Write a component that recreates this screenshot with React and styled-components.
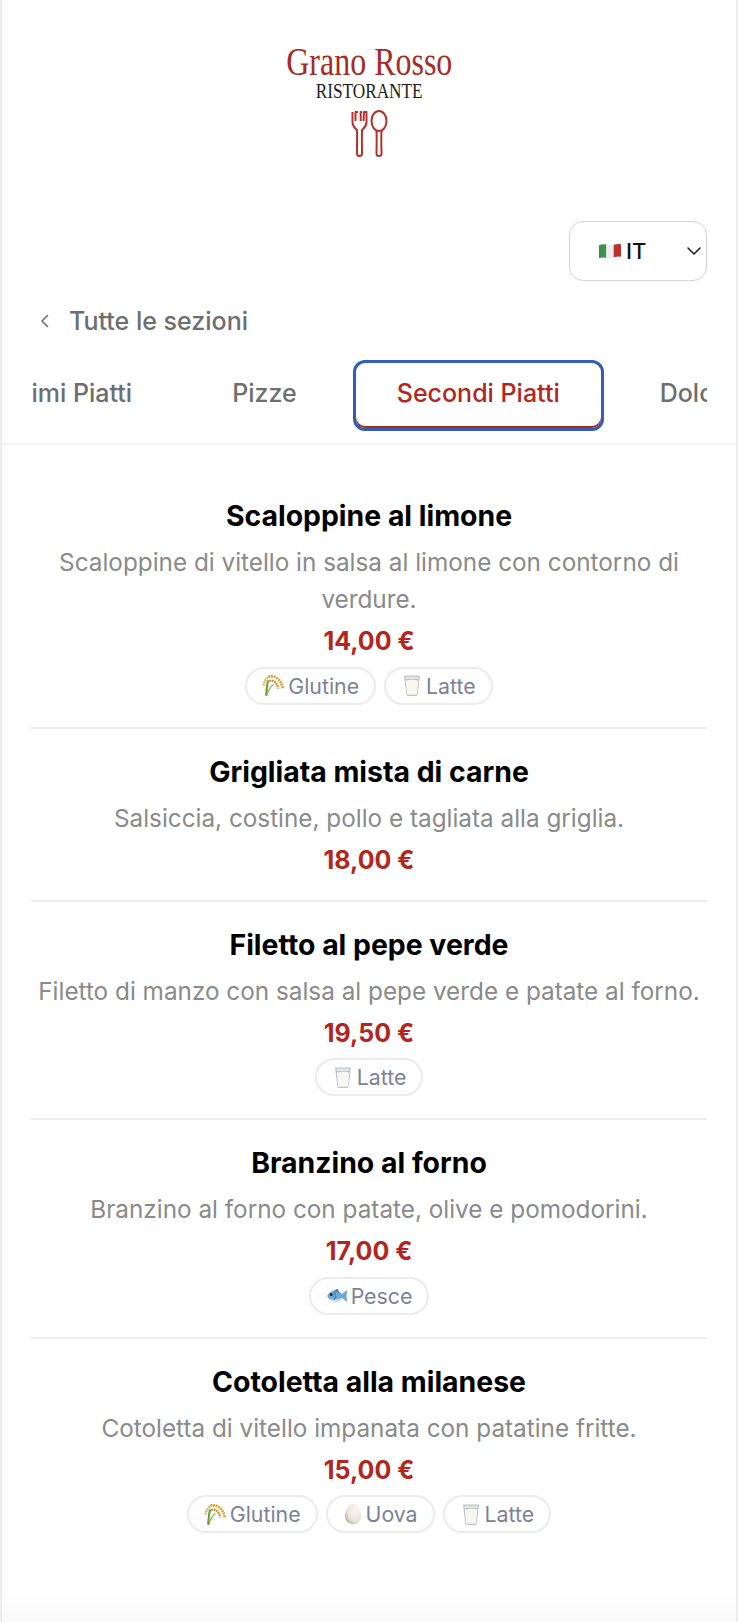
import React from 'react'
import styled, { createGlobalStyle } from 'styled-components'

const Wheat = () => (
	<svg width="23" height="23" viewBox="0 0 22 22" fill="none" strokeLinecap="butt">
		<path d="M4 21 C4.5 15 4.5 10 6 6" stroke="#6f9e38" strokeWidth="2" />
		<path d="M5 20 C6 15 8 12 11 10" stroke="#93b64c" strokeWidth="1.3" />
		<path d="M5.5 3.5 C3.5 5 2 7.5 1.5 11" stroke="#d8b25a" strokeWidth="2.2" strokeDasharray="1.8 .6" />
		<path d="M6 3 C11 0.5 18 4 20 14" stroke="#dca63e" strokeWidth="2.6" strokeDasharray="2 .6" />
		<path d="M7 7 C10.5 5 14.5 8 15.5 14" stroke="#c9923a" strokeWidth="2.2" strokeDasharray="1.8 .6" />
	</svg>
)

const Milk = () => (
	<svg width="22" height="23" viewBox="-2 0 22 22">
		<path d="M1 1 H17 L14.7 20 Q14.5 21.4 13 21.4 H5 Q3.5 21.4 3.3 20 Z" fill="#bfc4c7" />
		<path d="M2.8 6 Q9 4.6 15.3 6 L14 19.4 Q13.9 20.3 13 20.3 H5 Q4.1 20.3 4 19.4 Z" fill="#f8f6f0" />
		<path d="M2.4 2.2 H15.6 L15.4 4.6 H2.7 Z" fill="#e3e6e8" />
	</svg>
)

const Egg = () => (
	<svg width="20" height="22" viewBox="-1 0 20 22">
		<defs>
			<radialGradient id="egg" cx="65%" cy="35%" r="75%">
				<stop offset="0%" stopColor="#f7f6f1" />
				<stop offset="65%" stopColor="#e8e6dd" />
				<stop offset="100%" stopColor="#b0ad9e" />
			</radialGradient>
		</defs>
		<path d="M9 1 C13.5 1 17 7.5 17 13 C17 18 13.5 21 9 21 C4.5 21 1 18 1 13 C1 7.5 4.5 1 9 1 Z" fill="url(#egg)" />
	</svg>
)

const Fish = () => (
	<svg width="22" height="18" viewBox="0 0 22 18">
		<path d="M1 9 C4 3 11 1 16 7 L21 3 Q20 9 21 15 L16 11 C11 17 4 15 1 9 Z" fill="#6ea6d6" />
		<path d="M3 11 C7 14 12 13 16 10 C12 16 6 16 3 11 Z" fill="#d3e5f2" />
		<path d="M8 3 L12 2 L13 6 Z" fill="#3f78ad" />
		<path d="M8 4 C10 7 10 10 8 13" stroke="#3f78ad" strokeWidth="1" fill="none" />
		<circle cx="5.2" cy="7.5" r="1.5" fill="#23303c" />
	</svg>
)

const Flag = () => (
	<svg width="22" height="16" viewBox="0 0 21 15">
		<path d="M0 2 Q3 .6 7 1.4 V14 Q3 13.2 0 14.4 Z" fill="#3f8f50" />
		<path d="M7 1.4 Q10 2.2 14 1.6 V13.4 Q10 14.6 7 14 Z" fill="#ececec" />
		<path d="M14 1.6 Q18 .6 21 1 V13 Q18 12.6 14 13.4 Z" fill="#b8322f" />
	</svg>
)

const Chevron = ({ dir }) => (
	<svg width="18" height="18" viewBox="0 0 18 18" fill="none" stroke="currentColor" strokeWidth="1.6" strokeLinecap="round" strokeLinejoin="round">
		{dir === 'left' ? <path d="M11.5 3.5 L6 9 L11.5 14.5" /> : <path d="M3 6 L9 12 L15 6" />}
	</svg>
)

const Cutlery = () => (
	<svg width="37" height="47" viewBox="0 0 37 47" fill="none" stroke="#b3322b" strokeWidth="2" strokeLinejoin="round">
		<path d="M1.5 2 V12 C1.5 17 4.5 18.5 6 20 C6.2 30 6 38 6 43.5 Q6 46 8.5 46 Q11 46 11 43.5 C11 38 10.8 30 11 20 C12.5 18.5 15.5 17 15.5 12 V2 L13 2 L12.5 11 M11 2 L9.7 2 L9.7 11 M7.2 2 L6 2 L4.5 2 L4.5 11" />
		<ellipse cx="28" cy="11" rx="7.5" ry="10" />
		<path d="M25.5 21 C26 30 25.5 38 25.5 43.5 Q25.5 46 28 46 Q30.5 46 30.5 43.5 C30.5 38 30 30 30.5 21" />
	</svg>
)

const sections = ['Primi Piatti', 'Pizze', 'Secondi Piatti', 'Dolci']

const allergens = {
	glutine: { label: 'Glutine', icon: <Wheat /> },
	latte: { label: 'Latte', icon: <Milk /> },
	uova: { label: 'Uova', icon: <Egg /> },
	pesce: { label: 'Pesce', icon: <Fish /> },
}

const dishes = [
	{ name: 'Scaloppine al limone', desc: 'Scaloppine di vitello in salsa al limone con contorno di verdure.', price: '14,00 €', tags: ['glutine', 'latte'] },
	{ name: 'Grigliata mista di carne', desc: 'Salsiccia, costine, pollo e tagliata alla griglia.', price: '18,00 €', tags: [] },
	{ name: 'Filetto al pepe verde', desc: 'Filetto di manzo con salsa al pepe verde e patate al forno.', price: '19,50 €', tags: ['latte'] },
	{ name: 'Branzino al forno', desc: 'Branzino al forno con patate, olive e pomodorini.', price: '17,00 €', tags: ['pesce'] },
	{ name: 'Cotoletta alla milanese', desc: 'Cotoletta di vitello impanata con patatine fritte.', price: '15,00 €', tags: ['glutine', 'uova', 'latte'] },
]

const App = () => {
	return (
		<Page>
			<GlobalStyle />
			<Logo>
				<Brand>Grano Rosso</Brand>
				<Sub>RISTORANTE</Sub>
				<Cutlery />
			</Logo>
			<LangRow>
				<LangSelect>
					<Flag />
					<LangCode>IT</LangCode>
					<LangArrow><Chevron dir="down" /></LangArrow>
				</LangSelect>
			</LangRow>
			<BackLink>
				<Chevron dir="left" />
				Tutte le sezioni
			</BackLink>
			<TabsBar>
				<TabsTrack>
					{sections.map((s) => (
						<Tab key={s} $active={s === 'Secondi Piatti'}>{s}</Tab>
					))}
				</TabsTrack>
			</TabsBar>
			<List>
				{dishes.map((d) => (
					<Dish key={d.name}>
						<DishName>{d.name}</DishName>
						<DishDesc>{d.desc}</DishDesc>
						<Price>{d.price}</Price>
						{d.tags.length > 0 && (
							<Tags>
								{d.tags.map((t) => (
									<Tag key={t}>
										{allergens[t].icon}
										{allergens[t].label}
									</Tag>
								))}
							</Tags>
						)}
					</Dish>
				))}
			</List>
			<BottomFade />
		</Page>
	)
}

export default App

const GlobalStyle = createGlobalStyle`
	* { box-sizing: border-box; }
	html, body { margin: 0; padding: 0; background: #fff; }
	body { font-family: Inter, "Liberation Sans", sans-serif; }
`

const Page = styled.div`
	position: relative;
	height: 1622px;
	overflow: hidden;
	background: #fff;
	border-left: 2px solid #ececec;
	border-right: 2px solid #ececec;
`

const Logo = styled.header`
	display: flex;
	flex-direction: column;
	align-items: center;
	padding-top: 43px;
	height: 221px;
`

const Brand = styled.div`
	font-family: "Liberation Serif", serif;
	font-size: 39px;
	line-height: 38px;
	color: #a82a26;
	transform: scaleX(0.82);
	white-space: nowrap;
`

const Sub = styled.div`
	font-family: "Liberation Serif", serif;
	font-size: 21px;
	line-height: 20px;
	color: #1c1c1c;
	transform: scaleX(0.82);
	margin-bottom: 9px;
`

const LangRow = styled.div`
	display: flex;
	justify-content: flex-end;
	padding-right: 29px;
`

const LangSelect = styled.div`
	position: relative;
	display: flex;
	align-items: center;
	width: 138px;
	height: 60px;
	padding-left: 29px;
	gap: 5px;
	border: 1.5px solid #d4d4d4;
	border-radius: 14px;
	background: #fff;
`

const LangCode = styled.span`
	font-size: 22px;
	font-weight: 500;
	color: #111;
`

const LangArrow = styled.span`
	position: absolute;
	right: 3px;
	top: 20px;
	color: #222;
`

const BackLink = styled.div`
	display: flex;
	align-items: center;
	gap: 15px;
	margin: 25px 0 0 34px;
	font-size: 25px;
	font-weight: 500;
	color: #6e6e6e;
`

const TabsBar = styled.nav`
	margin-top: 24px;
	padding: 0 29px 12px;
	border-bottom: 2px solid #f3f3f3;
`

const TabsTrack = styled.div`
	display: flex;
	gap: 12px;
	overflow: hidden;
	& > :first-child { margin-left: -69.5px; }
`

const Tab = styled.div`
	flex: none;
	height: 71px;
	padding: 0 41px 5px;
	display: flex;
	align-items: center;
	font-size: 25px;
	font-weight: 500;
	white-space: nowrap;
	border: 3px solid ${(p) => (p.$active ? '#2f5fb8' : 'transparent')};
	border-radius: 12px;
	color: ${(p) => (p.$active ? '#b3261e' : '#6e6e6e')};
	box-shadow: ${(p) => (p.$active ? 'inset 0 -2px 0 #b3261e' : 'none')};
`

const List = styled.main`
	padding: 0 29px;
`

const Dish = styled.article`
	display: flex;
	flex-direction: column;
	align-items: center;
	text-align: center;
	padding: 24px 0 22px;
	border-bottom: 2px solid #ececec;
	&:first-child { padding-top: 52px; }
	&:last-child { border-bottom: 0; }
`

const DishName = styled.h3`
	margin: 0 0 9px;
	font-size: 28.4px;
	line-height: 38px;
	font-weight: 700;
	color: #000;
`

const DishDesc = styled.p`
	margin: 0;
	font-size: 24.3px;
	line-height: 37px;
	color: #8a8a8a;
`

const Price = styled.div`
	margin-top: 5px;
	font-size: 25px;
	line-height: 36px;
	font-weight: 700;
	color: #b3261e;
`

const Tags = styled.div`
	display: flex;
	gap: 8px;
	margin-top: 7.5px;
`

const Tag = styled.span`
	display: inline-flex;
	align-items: center;
	gap: 3px;
	height: 38px;
	padding: 0 15px;
	border: 2px solid #ebebeb;
	border-radius: 19px;
	font-size: 21.3px;
	color: #7c8296;
`

const BottomFade = styled.div`
	position: absolute;
	left: 0;
	right: 0;
	bottom: 0;
	height: 32px;
	background: linear-gradient(#fff, #f9f9f9);
`
